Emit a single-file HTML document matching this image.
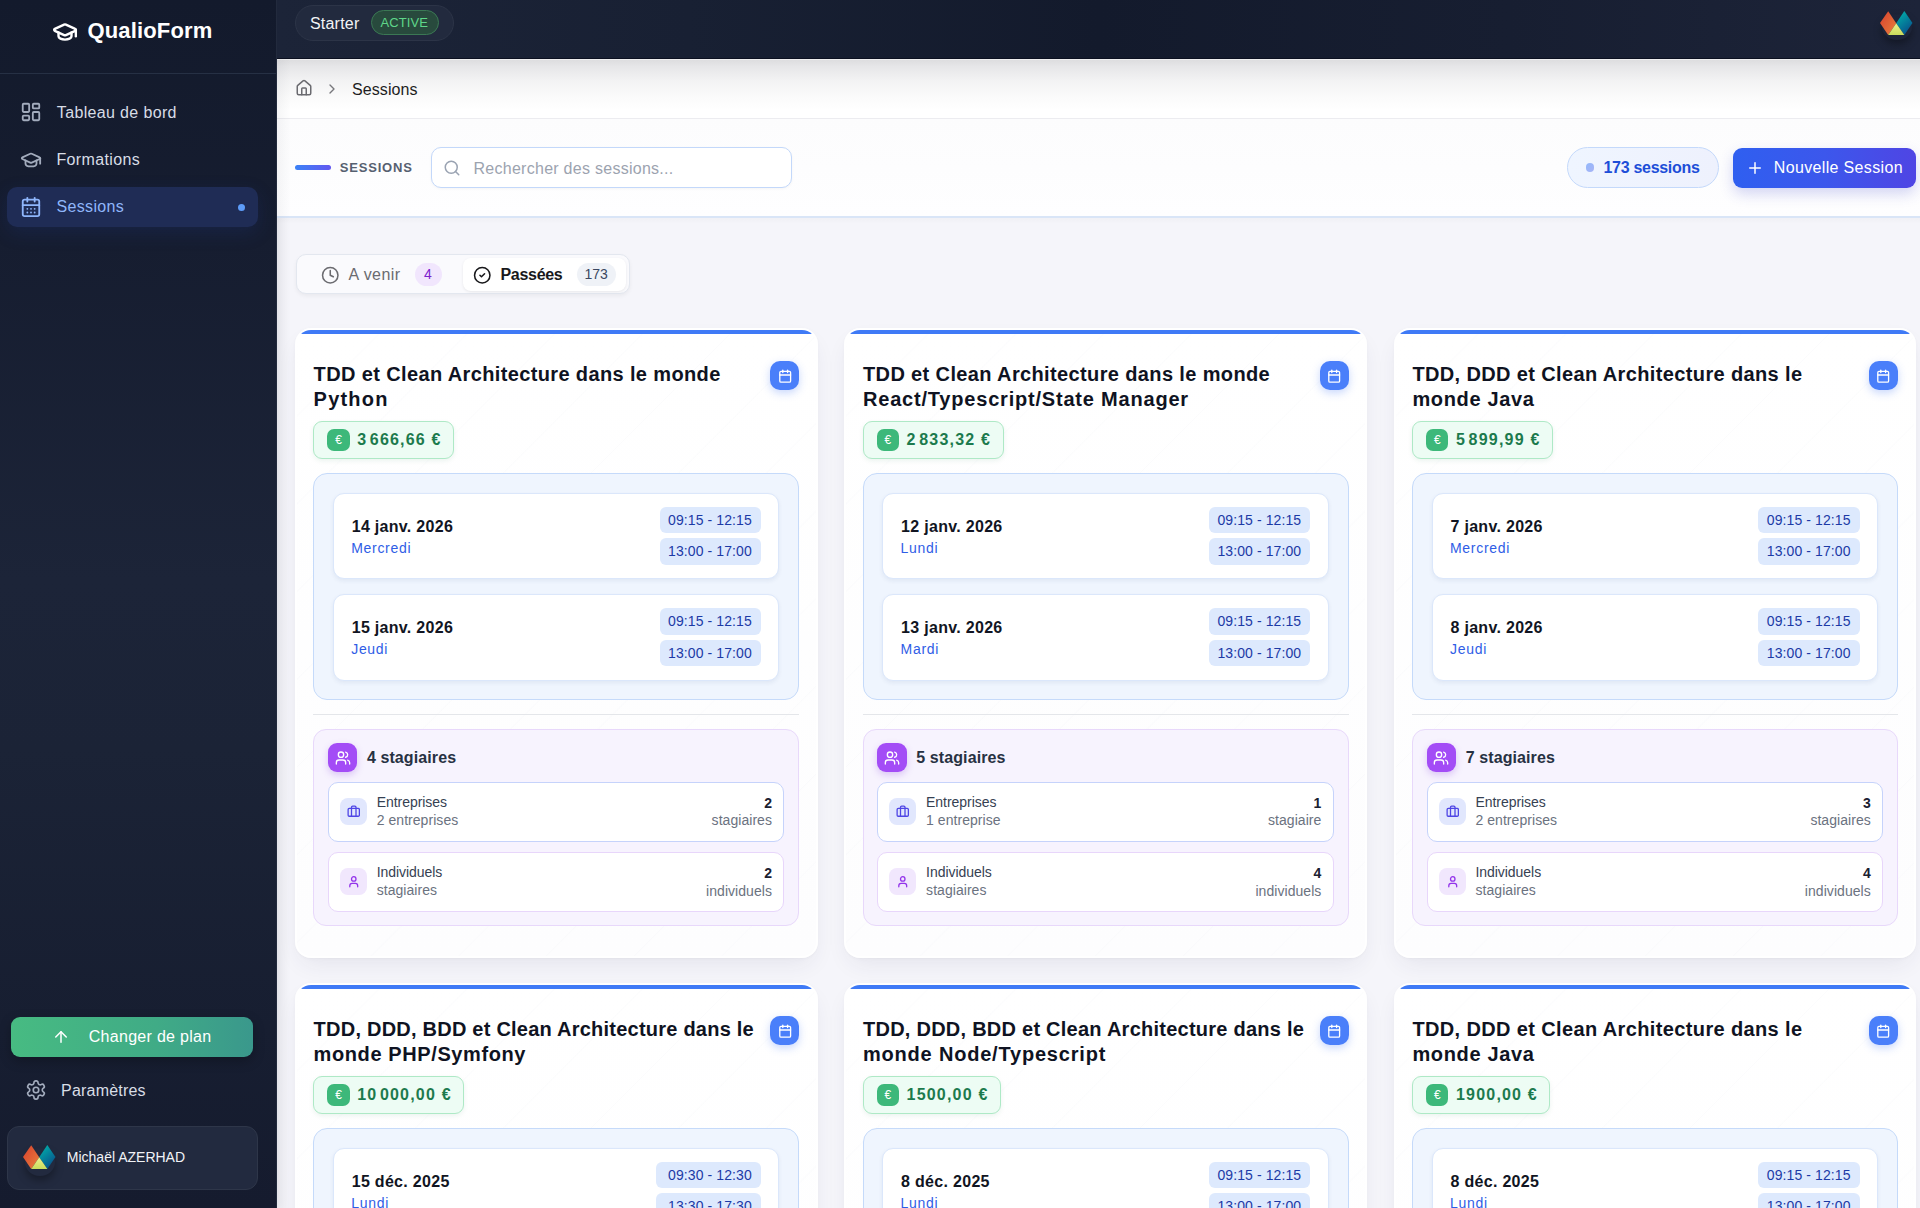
<!DOCTYPE html>
<html><head><meta charset="utf-8"><title>Sessions</title>
<style>
html,body{margin:0;padding:0;width:1920px;height:1208px;overflow:hidden;background:#f5f5fa;font-family:"Liberation Sans", sans-serif;}
*{font-family:"Liberation Sans", sans-serif;}
.card{border-radius:16px;}
.ns{display:inline-block;width:2.5px}
.cardbg{position:absolute;left:0;top:0;right:0;bottom:0;border-radius:16px;background:
 repeating-linear-gradient(135deg, rgba(120,130,170,0.0) 0px, rgba(120,130,170,0.0) 60px, rgba(120,130,170,0.018) 61px, rgba(120,130,170,0.0) 62px),
 linear-gradient(180deg,#ffffff 0%,#fdfdfe 100%);
 border:2px solid rgba(255,255,255,.95);box-sizing:border-box;
 box-shadow:0 10px 24px -6px rgba(40,40,90,.09),0 1px 3px rgba(0,0,0,.03);}
</style></head><body>
<div style="position:absolute;left:0;top:0;width:277px;height:1208px;background:linear-gradient(180deg,#131a2c 0%,#161d30 20%,#1c2438 48%,#1b2336 62%,#171e31 85%,#151b2e 100%);box-shadow:2px 0 10px rgba(0,0,0,.06);"></div><div style="position:absolute;left:0;top:72.5px;width:276px;height:1px;background:#263044"></div><div style="position:absolute;left:276px;top:0;width:1px;height:1208px;background:#222a3d"></div><svg style="position:absolute;left:51.50px;top:18.50px;" width="26" height="26" viewBox="0 0 24 24" fill="none" stroke="#ffffff" stroke-width="2.2" stroke-linecap="round" stroke-linejoin="round"><path d="M21.42 10.922a1 1 0 0 0-.019-1.838L12.83 5.18a2 2 0 0 0-1.66 0L2.6 9.08a1 1 0 0 0 0 1.832l8.57 3.908a2 2 0 0 0 1.66 0z"/><path d="M22 10v6"/><path d="M6 12.5V16a6 3 0 0 0 12 0v-3.5"/></svg><div style="position:absolute;left:87.50px;top:16.58px;font-size:22px;line-height:28px;font-weight:700;color:#ffffff;white-space:nowrap;letter-spacing:0.15px;">QualioForm</div><div style="position:absolute;left:7px;top:187px;width:251px;height:40px;border-radius:10px;background:#1f2c55;box-shadow:0 6px 18px rgba(30,60,140,.22)"></div><svg style="position:absolute;left:20.20px;top:101.40px;" width="22" height="22" viewBox="0 0 24 24" fill="none" stroke="#a3acbd" stroke-width="2" stroke-linecap="round" stroke-linejoin="round"><rect width="7" height="9" x="3" y="3" rx="1"/><rect width="7" height="5" x="14" y="3" rx="1"/><rect width="7" height="9" x="14" y="12" rx="1"/><rect width="7" height="5" x="3" y="16" rx="1"/></svg><div style="position:absolute;left:56.80px;top:102.56px;font-size:16px;line-height:20px;font-weight:400;color:#d8dde6;white-space:nowrap;letter-spacing:0.35px;">Tableau de bord</div><svg style="position:absolute;left:20.00px;top:148.50px;" width="22" height="22" viewBox="0 0 24 24" fill="none" stroke="#a3acbd" stroke-width="2" stroke-linecap="round" stroke-linejoin="round"><path d="M21.42 10.922a1 1 0 0 0-.019-1.838L12.83 5.18a2 2 0 0 0-1.66 0L2.6 9.08a1 1 0 0 0 0 1.832l8.57 3.908a2 2 0 0 0 1.66 0z"/><path d="M22 10v6"/><path d="M6 12.5V16a6 3 0 0 0 12 0v-3.5"/></svg><div style="position:absolute;left:56.50px;top:150.26px;font-size:16px;line-height:20px;font-weight:400;color:#d8dde6;white-space:nowrap;letter-spacing:0.35px;">Formations</div><svg style="position:absolute;left:20.20px;top:195.90px;" width="22" height="22" viewBox="0 0 24 24" fill="none" stroke="#8fb6fb" stroke-width="2" stroke-linecap="round" stroke-linejoin="round"><path d="M8 2v4"/><path d="M16 2v4"/><rect width="18" height="18" x="3" y="4" rx="2"/><path d="M3 10h18"/><path d="M8 14h.01"/><path d="M12 14h.01"/><path d="M16 14h.01"/><path d="M8 18h.01"/><path d="M12 18h.01"/><path d="M16 18h.01"/></svg><div style="position:absolute;left:56.50px;top:197.26px;font-size:16px;line-height:20px;font-weight:400;color:#8fb6fb;white-space:nowrap;letter-spacing:0.35px;">Sessions</div><div style="position:absolute;left:237.5px;top:203.7px;width:7px;height:7px;border-radius:50%;background:#5d9cf8"></div><div style="position:absolute;left:11px;top:1017px;width:242px;height:40px;border-radius:9px;background:linear-gradient(90deg,#47bb82 0%,#40ab86 60%,#3a988c 100%);box-shadow:0 4px 12px rgba(0,0,0,.25)"></div><svg style="position:absolute;left:52.20px;top:1027.80px;" width="18" height="18" viewBox="0 0 24 24" fill="none" stroke="#ffffff" stroke-width="2" stroke-linecap="round" stroke-linejoin="round"><path d="m5 12 7-7 7 7"/><path d="M12 19V5"/></svg><div style="position:absolute;left:88.70px;top:1027.16px;font-size:16px;line-height:20px;font-weight:400;color:#ffffff;white-space:nowrap;letter-spacing:0.3px;">Changer de plan</div><svg style="position:absolute;left:24.60px;top:1079.40px;" width="22" height="22" viewBox="0 0 24 24" fill="none" stroke="#a3acbd" stroke-width="1.8" stroke-linecap="round" stroke-linejoin="round"><path d="M12.22 2h-.44a2 2 0 0 0-2 2v.18a2 2 0 0 1-1 1.73l-.43.25a2 2 0 0 1-2 0l-.15-.08a2 2 0 0 0-2.73.73l-.22.38a2 2 0 0 0 .73 2.73l.15.1a2 2 0 0 1 1 1.72v.51a2 2 0 0 1-1 1.74l-.15.09a2 2 0 0 0-.73 2.73l.22.38a2 2 0 0 0 2.73.73l.15-.08a2 2 0 0 1 2 0l.43.25a2 2 0 0 1 1 1.73V20a2 2 0 0 0 2 2h.44a2 2 0 0 0 2-2v-.18a2 2 0 0 1 1-1.73l.43-.25a2 2 0 0 1 2 0l.15.08a2 2 0 0 0 2.73-.73l.22-.39a2 2 0 0 0-.73-2.73l-.15-.08a2 2 0 0 1-1-1.74v-.5a2 2 0 0 1 1-1.74l.15-.09a2 2 0 0 0 .73-2.73l-.22-.38a2 2 0 0 0-2.73-.73l-.15.08a2 2 0 0 1-2 0l-.43-.25a2 2 0 0 1-1-1.73V4a2 2 0 0 0-2-2z"/><circle cx="12" cy="12" r="3"/></svg><div style="position:absolute;left:61.10px;top:1081.26px;font-size:16px;line-height:20px;font-weight:400;color:#d8dde6;white-space:nowrap;letter-spacing:0.2px;">Paramètres</div><div style="position:absolute;left:7px;top:1125.5px;width:251px;height:64.5px;border-radius:12px;background:#222a3f;border:1px solid #2e3649;box-sizing:border-box"></div><div style="position:absolute;left:25px;top:1148px;width:30px;height:28px;border-radius:50%;box-shadow:0 4px 8px rgba(0,0,0,.35)"></div><svg style="position:absolute;left:23.4px;top:1145px" width="32.5" height="24" viewBox="0 0 32.5 24"><defs><linearGradient id="lr" x1="0" y1="0" x2="1" y2="1"><stop offset="0" stop-color="#d8402e"/><stop offset="1" stop-color="#e8803c"/></linearGradient><linearGradient id="lt" x1="0" y1="0" x2="0.6" y2="1"><stop offset="0" stop-color="#00b9ad"/><stop offset="1" stop-color="#08528c"/></linearGradient><linearGradient id="ly" x1="0" y1="0" x2="0" y2="1"><stop offset="0" stop-color="#eef08e"/><stop offset="1" stop-color="#c9dc5c"/></linearGradient></defs><path d="M8.2 0.3 L0 12 L8.2 23.9 L16.2 12.2 Z" fill="url(#lr)"/><path d="M24.3 0.1 L32.5 12 L24.3 23.9 L16.2 12.2 Z" fill="url(#lt)"/><path d="M16.2 12.2 L8.2 23.9 L24.3 23.9 Z" fill="url(#ly)"/></svg><div style="position:absolute;left:66.80px;top:1148.05px;font-size:14px;line-height:18px;font-weight:400;color:#f1f3f7;white-space:nowrap;letter-spacing:0px;">Michaël AZERHAD</div><div style="position:absolute;left:277px;top:0;width:1643px;height:58.5px;background:linear-gradient(90deg,#1c2438 0%,#182033 25%,#131a2c 50%,#171e31 75%,#1d2439 100%);border-bottom:1px solid #0b1020;box-sizing:border-box"></div><div style="position:absolute;left:295px;top:5px;width:158.5px;height:36px;border-radius:18px;background:#222a3e;border:1px solid #2c3447;box-sizing:border-box"></div><div style="position:absolute;left:310.00px;top:13.76px;font-size:16px;line-height:20px;font-weight:400;color:#f3f4f6;white-space:nowrap;letter-spacing:0.2px;">Starter</div><div style="position:absolute;left:370.6px;top:10.4px;width:68.3px;height:25px;border-radius:13px;background:#284a3d;border:1px solid #3b7854;box-sizing:border-box"></div><div style="position:absolute;left:380.50px;top:15.10px;font-size:13px;line-height:16px;font-weight:400;color:#5fd68a;white-space:nowrap;letter-spacing:0.1px;">ACTIVE</div><div style="position:absolute;left:1882px;top:14px;width:30px;height:26px;border-radius:50%;box-shadow:0 4px 8px rgba(0,0,0,.35)"></div><svg style="position:absolute;left:1880.3px;top:10.6px" width="32.5" height="24" viewBox="0 0 32.5 24"><defs><linearGradient id="lr" x1="0" y1="0" x2="1" y2="1"><stop offset="0" stop-color="#d8402e"/><stop offset="1" stop-color="#e8803c"/></linearGradient><linearGradient id="lt" x1="0" y1="0" x2="0.6" y2="1"><stop offset="0" stop-color="#00b9ad"/><stop offset="1" stop-color="#08528c"/></linearGradient><linearGradient id="ly" x1="0" y1="0" x2="0" y2="1"><stop offset="0" stop-color="#eef08e"/><stop offset="1" stop-color="#c9dc5c"/></linearGradient></defs><path d="M8.2 0.3 L0 12 L8.2 23.9 L16.2 12.2 Z" fill="url(#lr)"/><path d="M24.3 0.1 L32.5 12 L24.3 23.9 L16.2 12.2 Z" fill="url(#lt)"/><path d="M16.2 12.2 L8.2 23.9 L24.3 23.9 Z" fill="url(#ly)"/></svg><div style="position:absolute;left:277px;top:58.5px;width:1643px;height:60px;background:linear-gradient(180deg,#dcdcde 0%,#e6e6e8 12%,#f2f2f3 35%,#fafafa 60%,#ffffff 85%)"></div><div style="position:absolute;left:277px;top:59px;width:1643px;height:1.2px;background:#eeeeef"></div><div style="position:absolute;left:277px;top:118px;width:1643px;height:1px;background:#ececf0"></div><svg style="position:absolute;left:295.20px;top:79.30px;" width="18" height="18" viewBox="0 0 24 24" fill="none" stroke="#6b6b70" stroke-width="2" stroke-linecap="round" stroke-linejoin="round"><path d="M15 21v-8a1 1 0 0 0-1-1h-4a1 1 0 0 0-1 1v8"/><path d="M3 10a2 2 0 0 1 .709-1.528l7-5.999a2 2 0 0 1 2.582 0l7 5.999A2 2 0 0 1 21 10v9a2 2 0 0 1-2 2H5a2 2 0 0 1-2-2z"/></svg><svg style="position:absolute;left:324.30px;top:80.70px;" width="16" height="16" viewBox="0 0 24 24" fill="none" stroke="#77777c" stroke-width="2" stroke-linecap="round" stroke-linejoin="round"><path d="m9 18 6-6-6-6"/></svg><div style="position:absolute;left:352.00px;top:79.66px;font-size:16px;line-height:20px;font-weight:400;color:#1d1d22;white-space:nowrap;letter-spacing:0.1px;">Sessions</div><div style="position:absolute;left:277px;top:119px;width:1643px;height:97px;background:linear-gradient(180deg,#fcfcfd,#fefeff)"></div><div style="position:absolute;left:277px;top:216px;width:1643px;height:1.5px;background:#d9e5f7"></div><div style="position:absolute;left:277px;top:217.5px;width:1643px;height:6px;background:linear-gradient(180deg,rgba(0,0,0,.02),rgba(0,0,0,0))"></div><div style="position:absolute;left:295px;top:165.4px;width:36px;height:4.6px;border-radius:3px;background:linear-gradient(90deg,#3b82f6,#6358f0)"></div><div style="position:absolute;left:339.80px;top:159.70px;font-size:13px;line-height:16px;font-weight:700;color:#566070;white-space:nowrap;letter-spacing:0.8px;">SESSIONS</div><div style="position:absolute;left:431px;top:147px;width:361px;height:41px;border-radius:10px;background:#ffffff;border:1.5px solid #c3d8fa;box-sizing:border-box;box-shadow:0 1px 3px rgba(0,0,0,.04)"></div><svg style="position:absolute;left:442.50px;top:158.50px;" width="18" height="18" viewBox="0 0 24 24" fill="none" stroke="#9aa3b2" stroke-width="2" stroke-linecap="round" stroke-linejoin="round"><circle cx="11" cy="11" r="8"/><path d="m21 21-4.3-4.3"/></svg><div style="position:absolute;left:473.50px;top:158.56px;font-size:16px;line-height:20px;font-weight:400;color:#9ca3af;white-space:nowrap;letter-spacing:0.27px;">Rechercher des sessions...</div><div style="position:absolute;left:1566.6px;top:146.8px;width:152.8px;height:41.6px;border-radius:21px;background:linear-gradient(90deg,#eff5ff,#eef1fd);border:1.5px solid #c4d9fb;box-sizing:border-box"></div><div style="position:absolute;left:1585.6px;top:163.2px;width:8.6px;height:8.6px;border-radius:50%;background:linear-gradient(135deg,#93b8fb,#a8b4f6)"></div><div style="position:absolute;left:1603.50px;top:157.86px;font-size:16px;line-height:20px;font-weight:700;color:#1d4ed8;white-space:nowrap;letter-spacing:-0.3px;">173 sessions</div><div style="position:absolute;left:1733px;top:147.5px;width:183.3px;height:40.5px;border-radius:9px;background:linear-gradient(90deg,#2f5ff0 0%,#3c57ec 50%,#4f45e4 100%);box-shadow:0 6px 14px rgba(60,70,200,.22)"></div><svg style="position:absolute;left:1746.40px;top:158.50px;" width="18" height="18" viewBox="0 0 24 24" fill="none" stroke="#ffffff" stroke-width="2" stroke-linecap="round" stroke-linejoin="round"><path d="M5 12h14"/><path d="M12 5v14"/></svg><div style="position:absolute;left:1773.75px;top:157.86px;font-size:16px;line-height:20px;font-weight:400;color:#ffffff;white-space:nowrap;letter-spacing:0.35px;">Nouvelle Session</div><div style="position:absolute;left:277px;top:217.5px;width:1643px;height:990.5px;background:#f5f5fa;z-index:-1"></div><div style="position:absolute;left:277px;top:58.5px;width:14px;height:1150px;background:linear-gradient(90deg,rgba(20,25,50,.045),rgba(20,25,50,0))"></div><div style="position:absolute;left:296px;top:254px;width:333.5px;height:39.5px;border-radius:10px;background:#fafafd;border:1px solid #e3e7ef;box-sizing:border-box;box-shadow:0 2px 4px rgba(0,0,0,.05)"></div><div style="position:absolute;left:462.8px;top:258px;width:163.5px;height:32.6px;border-radius:8px;background:#ffffff;box-shadow:0 1px 3px rgba(0,0,0,.08)"></div><svg style="position:absolute;left:320.60px;top:265.80px;" width="18.5" height="18.5" viewBox="0 0 24 24" fill="none" stroke="#6b6b70" stroke-width="2" stroke-linecap="round" stroke-linejoin="round"><circle cx="12" cy="12" r="10"/><polyline points="12 6 12 12 16 14"/></svg><div style="position:absolute;left:348.50px;top:265.46px;font-size:16px;line-height:20px;font-weight:400;color:#6b6b70;white-space:nowrap;letter-spacing:0.45px;">A venir</div><div style="position:absolute;left:414.5px;top:263.2px;width:27px;height:23px;border-radius:12px;background:#f1e6fd;text-align:center;font-size:14px;line-height:23px;color:#7e22ce">4</div><svg style="position:absolute;left:473.00px;top:265.80px;" width="18.5" height="18.5" viewBox="0 0 24 24" fill="none" stroke="#18181b" stroke-width="2" stroke-linecap="round" stroke-linejoin="round"><circle cx="12" cy="12" r="10"/><path d="m9 12 2 2 4-4"/></svg><div style="position:absolute;left:500.50px;top:265.46px;font-size:16px;line-height:20px;font-weight:700;color:#18181b;white-space:nowrap;letter-spacing:-0.3px;">Passées</div><div style="position:absolute;left:576.7px;top:263.2px;width:39px;height:23px;border-radius:12px;background:#eff2f7;text-align:center;font-size:14px;line-height:23px;color:#3b4861">173</div><div class="card" style="position:absolute;left:295px;top:328px;width:522.5px;height:630px;"><div class="cardbg"></div><div style="position:absolute;left:2px;top:2px;right:2px;height:40px;border-radius:14px 14px 0 0;overflow:hidden"><div style="height:4px;background:#3f7af6"></div></div><div style="position:absolute;left:18.60px;top:33.67px;font-size:20px;line-height:25px;font-weight:700;color:#0f1322;white-space:nowrap;letter-spacing:0.37px;">TDD et Clean Architecture dans le monde</div><div style="position:absolute;left:18.60px;top:58.77px;font-size:20px;line-height:25px;font-weight:700;color:#0f1322;white-space:nowrap;letter-spacing:1.2px;">Python</div><div style="position:absolute;left:475.3px;top:33.4px;width:29px;height:29px;border-radius:10px;background:#4a7ffa;box-shadow:0 3px 8px rgba(59,110,246,.28)"></div><svg style="position:absolute;left:482.60px;top:40.70px;" width="14.4" height="14.4" viewBox="0 0 24 24" fill="none" stroke="#ffffff" stroke-width="2.2" stroke-linecap="round" stroke-linejoin="round"><path d="M8 2v4"/><path d="M16 2v4"/><rect width="18" height="18" x="3" y="4" rx="2"/><path d="M3 10h18"/></svg><div style="position:absolute;left:18.3px;top:93px;height:37.7px;border-radius:9px;background:#edfcf4;border:1.5px solid #aee9c6;box-sizing:border-box;box-shadow:0 2px 5px rgba(16,120,70,.08);padding:0 11.5px 0 13px;display:flex;align-items:center;white-space:nowrap"><span style="display:inline-block;width:22.4px;height:22px;border-radius:7px;background:#3db87a;color:#fff;font-size:12px;line-height:22px;text-align:center;margin-right:7.5px">€</span><span style="font-size:16px;font-weight:700;color:#1c7a4d;letter-spacing:1.2px;line-height:22px">3<i class="ns"></i>666,66&nbsp;€</span></div><div style="position:absolute;left:18.3px;top:145.2px;width:486px;height:227px;border-radius:14px;background:#eff5fe;border:1.5px solid #c5dafa;box-sizing:border-box"></div><div style="position:absolute;left:38px;top:164.8px;width:446.3px;height:86.6px;border-radius:11px;background:#ffffff;border:1px solid #dbe7fb;box-sizing:border-box;box-shadow:0 2px 4px rgba(30,60,120,.07)"></div><div style="position:absolute;left:56.70px;top:188.66px;font-size:16px;line-height:20px;font-weight:700;color:#111522;white-space:nowrap;letter-spacing:0.3px;">14 janv. 2026</div><div style="position:absolute;left:56.20px;top:211.15px;font-size:14px;line-height:18px;font-weight:400;color:#2f5de6;white-space:nowrap;letter-spacing:0.7px;">Mercredi</div><div style="position:absolute;right:56.499999999999986px;top:178.8px;display:flex;flex-direction:column"><div style="height:26.5px;border-radius:6px;background:#dde9fd;color:#1c3aa6;font-size:14px;line-height:26.5px;text-align:right;padding:0 9.2px 0 8.5px;white-space:nowrap;letter-spacing:0.1px;margin-bottom:5px">09:15 - 12:15</div><div style="height:26.5px;border-radius:6px;background:#dde9fd;color:#1c3aa6;font-size:14px;line-height:26.5px;text-align:right;padding:0 9.2px 0 8.5px;white-space:nowrap;letter-spacing:0.1px;margin-bottom:5px">13:00 - 17:00</div></div><div style="position:absolute;left:38px;top:266.0px;width:446.3px;height:86.6px;border-radius:11px;background:#ffffff;border:1px solid #dbe7fb;box-sizing:border-box;box-shadow:0 2px 4px rgba(30,60,120,.07)"></div><div style="position:absolute;left:56.70px;top:289.86px;font-size:16px;line-height:20px;font-weight:700;color:#111522;white-space:nowrap;letter-spacing:0.3px;">15 janv. 2026</div><div style="position:absolute;left:56.20px;top:312.35px;font-size:14px;line-height:18px;font-weight:400;color:#2f5de6;white-space:nowrap;letter-spacing:0.7px;">Jeudi</div><div style="position:absolute;right:56.499999999999986px;top:280.0px;display:flex;flex-direction:column"><div style="height:26.5px;border-radius:6px;background:#dde9fd;color:#1c3aa6;font-size:14px;line-height:26.5px;text-align:right;padding:0 9.2px 0 8.5px;white-space:nowrap;letter-spacing:0.1px;margin-bottom:5px">09:15 - 12:15</div><div style="height:26.5px;border-radius:6px;background:#dde9fd;color:#1c3aa6;font-size:14px;line-height:26.5px;text-align:right;padding:0 9.2px 0 8.5px;white-space:nowrap;letter-spacing:0.1px;margin-bottom:5px">13:00 - 17:00</div></div><div style="position:absolute;left:18.3px;top:385.8px;width:486px;height:1px;background:#e4e6ea"></div><div style="position:absolute;left:18.3px;top:400.8px;width:486px;height:197.2px;border-radius:13px;background:#f7f3fe;border:1.5px solid #e8d8fb;box-sizing:border-box"></div><div style="position:absolute;left:33px;top:415px;width:29.2px;height:29.2px;border-radius:9px;background:#a34cf6;box-shadow:0 3px 7px rgba(130,60,220,.25)"></div><svg style="position:absolute;left:39.60px;top:421.60px;" width="16" height="16" viewBox="0 0 24 24" fill="none" stroke="#ffffff" stroke-width="2" stroke-linecap="round" stroke-linejoin="round"><path d="M16 21v-2a4 4 0 0 0-4-4H6a4 4 0 0 0-4 4v2"/><circle cx="9" cy="7" r="4"/><path d="M22 21v-2a4 4 0 0 0-3-3.87"/><path d="M16 3.13a4 4 0 0 1 0 7.75"/></svg><div style="position:absolute;left:71.90px;top:419.96px;font-size:16px;line-height:20px;font-weight:700;color:#273142;white-space:nowrap;letter-spacing:0.1px;">4 stagiaires</div><div style="position:absolute;left:33px;top:453.5px;width:456.3px;height:60px;border-radius:10px;background:#ffffff;border:1.2px solid #c6d3fb;box-sizing:border-box"></div><div style="position:absolute;left:45.1px;top:470.2px;width:26.9px;height:26.9px;border-radius:8px;background:#e1e7fd"></div><svg style="position:absolute;left:51.80px;top:476.90px;" width="13.5" height="13.5" viewBox="0 0 24 24" fill="none" stroke="#4f46e5" stroke-width="2.3" stroke-linecap="round" stroke-linejoin="round"><path d="M16 20V4a2 2 0 0 0-2-2h-4a2 2 0 0 0-2 2v16"/><rect width="20" height="14" x="2" y="6" rx="2"/></svg><div style="position:absolute;left:81.70px;top:464.95px;font-size:14px;line-height:18px;font-weight:400;color:#364152;white-space:nowrap;letter-spacing:-0.05px;">Entreprises</div><div style="position:absolute;left:81.70px;top:483.15px;font-size:14px;line-height:18px;font-weight:400;color:#6b7280;white-space:nowrap;letter-spacing:0.05px;">2 entreprises</div><div style="position:absolute;left:33.00px;top:465.75px;font-size:14px;line-height:18px;font-weight:700;color:#1a2030;white-space:nowrap;letter-spacing:0px;width:444.0px;text-align:right;">2</div><div style="position:absolute;left:33.00px;top:483.45px;font-size:14px;line-height:18px;font-weight:400;color:#6b7280;white-space:nowrap;letter-spacing:0.05px;width:444.0px;text-align:right;">stagiaires</div><div style="position:absolute;left:33px;top:523.6px;width:456.3px;height:60px;border-radius:10px;background:#ffffff;border:1.2px solid #e8d6fb;box-sizing:border-box"></div><div style="position:absolute;left:45.1px;top:540.3000000000001px;width:26.9px;height:26.9px;border-radius:8px;background:#f1e7fd"></div><svg style="position:absolute;left:51.80px;top:547.00px;" width="13.5" height="13.5" viewBox="0 0 24 24" fill="none" stroke="#9333ea" stroke-width="2.3" stroke-linecap="round" stroke-linejoin="round"><path d="M19 21v-2a4 4 0 0 0-4-4H9a4 4 0 0 0-4 4v2"/><circle cx="12" cy="7" r="4"/></svg><div style="position:absolute;left:81.70px;top:535.05px;font-size:14px;line-height:18px;font-weight:400;color:#364152;white-space:nowrap;letter-spacing:-0.05px;">Individuels</div><div style="position:absolute;left:81.70px;top:553.25px;font-size:14px;line-height:18px;font-weight:400;color:#6b7280;white-space:nowrap;letter-spacing:0.05px;">stagiaires</div><div style="position:absolute;left:33.00px;top:535.85px;font-size:14px;line-height:18px;font-weight:700;color:#1a2030;white-space:nowrap;letter-spacing:0px;width:444.0px;text-align:right;">2</div><div style="position:absolute;left:33.00px;top:553.55px;font-size:14px;line-height:18px;font-weight:400;color:#6b7280;white-space:nowrap;letter-spacing:0.05px;width:444.0px;text-align:right;">individuels</div></div><div class="card" style="position:absolute;left:844.4px;top:328px;width:522.5px;height:630px;"><div class="cardbg"></div><div style="position:absolute;left:2px;top:2px;right:2px;height:40px;border-radius:14px 14px 0 0;overflow:hidden"><div style="height:4px;background:#3f7af6"></div></div><div style="position:absolute;left:18.60px;top:33.67px;font-size:20px;line-height:25px;font-weight:700;color:#0f1322;white-space:nowrap;letter-spacing:0.37px;">TDD et Clean Architecture dans le monde</div><div style="position:absolute;left:18.60px;top:58.77px;font-size:20px;line-height:25px;font-weight:700;color:#0f1322;white-space:nowrap;letter-spacing:0.8px;">React/Typescript/State Manager</div><div style="position:absolute;left:475.3px;top:33.4px;width:29px;height:29px;border-radius:10px;background:#4a7ffa;box-shadow:0 3px 8px rgba(59,110,246,.28)"></div><svg style="position:absolute;left:482.60px;top:40.70px;" width="14.4" height="14.4" viewBox="0 0 24 24" fill="none" stroke="#ffffff" stroke-width="2.2" stroke-linecap="round" stroke-linejoin="round"><path d="M8 2v4"/><path d="M16 2v4"/><rect width="18" height="18" x="3" y="4" rx="2"/><path d="M3 10h18"/></svg><div style="position:absolute;left:18.3px;top:93px;height:37.7px;border-radius:9px;background:#edfcf4;border:1.5px solid #aee9c6;box-sizing:border-box;box-shadow:0 2px 5px rgba(16,120,70,.08);padding:0 11.5px 0 13px;display:flex;align-items:center;white-space:nowrap"><span style="display:inline-block;width:22.4px;height:22px;border-radius:7px;background:#3db87a;color:#fff;font-size:12px;line-height:22px;text-align:center;margin-right:7.5px">€</span><span style="font-size:16px;font-weight:700;color:#1c7a4d;letter-spacing:1.2px;line-height:22px">2<i class="ns"></i>833,32&nbsp;€</span></div><div style="position:absolute;left:18.3px;top:145.2px;width:486px;height:227px;border-radius:14px;background:#eff5fe;border:1.5px solid #c5dafa;box-sizing:border-box"></div><div style="position:absolute;left:38px;top:164.8px;width:446.3px;height:86.6px;border-radius:11px;background:#ffffff;border:1px solid #dbe7fb;box-sizing:border-box;box-shadow:0 2px 4px rgba(30,60,120,.07)"></div><div style="position:absolute;left:56.70px;top:188.66px;font-size:16px;line-height:20px;font-weight:700;color:#111522;white-space:nowrap;letter-spacing:0.3px;">12 janv. 2026</div><div style="position:absolute;left:56.20px;top:211.15px;font-size:14px;line-height:18px;font-weight:400;color:#2f5de6;white-space:nowrap;letter-spacing:0.7px;">Lundi</div><div style="position:absolute;right:56.499999999999986px;top:178.8px;display:flex;flex-direction:column"><div style="height:26.5px;border-radius:6px;background:#dde9fd;color:#1c3aa6;font-size:14px;line-height:26.5px;text-align:right;padding:0 9.2px 0 8.5px;white-space:nowrap;letter-spacing:0.1px;margin-bottom:5px">09:15 - 12:15</div><div style="height:26.5px;border-radius:6px;background:#dde9fd;color:#1c3aa6;font-size:14px;line-height:26.5px;text-align:right;padding:0 9.2px 0 8.5px;white-space:nowrap;letter-spacing:0.1px;margin-bottom:5px">13:00 - 17:00</div></div><div style="position:absolute;left:38px;top:266.0px;width:446.3px;height:86.6px;border-radius:11px;background:#ffffff;border:1px solid #dbe7fb;box-sizing:border-box;box-shadow:0 2px 4px rgba(30,60,120,.07)"></div><div style="position:absolute;left:56.70px;top:289.86px;font-size:16px;line-height:20px;font-weight:700;color:#111522;white-space:nowrap;letter-spacing:0.3px;">13 janv. 2026</div><div style="position:absolute;left:56.20px;top:312.35px;font-size:14px;line-height:18px;font-weight:400;color:#2f5de6;white-space:nowrap;letter-spacing:0.7px;">Mardi</div><div style="position:absolute;right:56.499999999999986px;top:280.0px;display:flex;flex-direction:column"><div style="height:26.5px;border-radius:6px;background:#dde9fd;color:#1c3aa6;font-size:14px;line-height:26.5px;text-align:right;padding:0 9.2px 0 8.5px;white-space:nowrap;letter-spacing:0.1px;margin-bottom:5px">09:15 - 12:15</div><div style="height:26.5px;border-radius:6px;background:#dde9fd;color:#1c3aa6;font-size:14px;line-height:26.5px;text-align:right;padding:0 9.2px 0 8.5px;white-space:nowrap;letter-spacing:0.1px;margin-bottom:5px">13:00 - 17:00</div></div><div style="position:absolute;left:18.3px;top:385.8px;width:486px;height:1px;background:#e4e6ea"></div><div style="position:absolute;left:18.3px;top:400.8px;width:486px;height:197.2px;border-radius:13px;background:#f7f3fe;border:1.5px solid #e8d8fb;box-sizing:border-box"></div><div style="position:absolute;left:33px;top:415px;width:29.2px;height:29.2px;border-radius:9px;background:#a34cf6;box-shadow:0 3px 7px rgba(130,60,220,.25)"></div><svg style="position:absolute;left:39.60px;top:421.60px;" width="16" height="16" viewBox="0 0 24 24" fill="none" stroke="#ffffff" stroke-width="2" stroke-linecap="round" stroke-linejoin="round"><path d="M16 21v-2a4 4 0 0 0-4-4H6a4 4 0 0 0-4 4v2"/><circle cx="9" cy="7" r="4"/><path d="M22 21v-2a4 4 0 0 0-3-3.87"/><path d="M16 3.13a4 4 0 0 1 0 7.75"/></svg><div style="position:absolute;left:71.90px;top:419.96px;font-size:16px;line-height:20px;font-weight:700;color:#273142;white-space:nowrap;letter-spacing:0.1px;">5 stagiaires</div><div style="position:absolute;left:33px;top:453.5px;width:456.3px;height:60px;border-radius:10px;background:#ffffff;border:1.2px solid #c6d3fb;box-sizing:border-box"></div><div style="position:absolute;left:45.1px;top:470.2px;width:26.9px;height:26.9px;border-radius:8px;background:#e1e7fd"></div><svg style="position:absolute;left:51.80px;top:476.90px;" width="13.5" height="13.5" viewBox="0 0 24 24" fill="none" stroke="#4f46e5" stroke-width="2.3" stroke-linecap="round" stroke-linejoin="round"><path d="M16 20V4a2 2 0 0 0-2-2h-4a2 2 0 0 0-2 2v16"/><rect width="20" height="14" x="2" y="6" rx="2"/></svg><div style="position:absolute;left:81.70px;top:464.95px;font-size:14px;line-height:18px;font-weight:400;color:#364152;white-space:nowrap;letter-spacing:-0.05px;">Entreprises</div><div style="position:absolute;left:81.70px;top:483.15px;font-size:14px;line-height:18px;font-weight:400;color:#6b7280;white-space:nowrap;letter-spacing:0.05px;">1 entreprise</div><div style="position:absolute;left:33.00px;top:465.75px;font-size:14px;line-height:18px;font-weight:700;color:#1a2030;white-space:nowrap;letter-spacing:0px;width:444.0px;text-align:right;">1</div><div style="position:absolute;left:33.00px;top:483.45px;font-size:14px;line-height:18px;font-weight:400;color:#6b7280;white-space:nowrap;letter-spacing:0.05px;width:444.0px;text-align:right;">stagiaire</div><div style="position:absolute;left:33px;top:523.6px;width:456.3px;height:60px;border-radius:10px;background:#ffffff;border:1.2px solid #e8d6fb;box-sizing:border-box"></div><div style="position:absolute;left:45.1px;top:540.3000000000001px;width:26.9px;height:26.9px;border-radius:8px;background:#f1e7fd"></div><svg style="position:absolute;left:51.80px;top:547.00px;" width="13.5" height="13.5" viewBox="0 0 24 24" fill="none" stroke="#9333ea" stroke-width="2.3" stroke-linecap="round" stroke-linejoin="round"><path d="M19 21v-2a4 4 0 0 0-4-4H9a4 4 0 0 0-4 4v2"/><circle cx="12" cy="7" r="4"/></svg><div style="position:absolute;left:81.70px;top:535.05px;font-size:14px;line-height:18px;font-weight:400;color:#364152;white-space:nowrap;letter-spacing:-0.05px;">Individuels</div><div style="position:absolute;left:81.70px;top:553.25px;font-size:14px;line-height:18px;font-weight:400;color:#6b7280;white-space:nowrap;letter-spacing:0.05px;">stagiaires</div><div style="position:absolute;left:33.00px;top:535.85px;font-size:14px;line-height:18px;font-weight:700;color:#1a2030;white-space:nowrap;letter-spacing:0px;width:444.0px;text-align:right;">4</div><div style="position:absolute;left:33.00px;top:553.55px;font-size:14px;line-height:18px;font-weight:400;color:#6b7280;white-space:nowrap;letter-spacing:0.05px;width:444.0px;text-align:right;">individuels</div></div><div class="card" style="position:absolute;left:1393.8px;top:328px;width:522.5px;height:630px;"><div class="cardbg"></div><div style="position:absolute;left:2px;top:2px;right:2px;height:40px;border-radius:14px 14px 0 0;overflow:hidden"><div style="height:4px;background:#3f7af6"></div></div><div style="position:absolute;left:18.60px;top:33.67px;font-size:20px;line-height:25px;font-weight:700;color:#0f1322;white-space:nowrap;letter-spacing:0.37px;">TDD, DDD et Clean Architecture dans le</div><div style="position:absolute;left:18.60px;top:58.77px;font-size:20px;line-height:25px;font-weight:700;color:#0f1322;white-space:nowrap;letter-spacing:0.66px;">monde Java</div><div style="position:absolute;left:475.3px;top:33.4px;width:29px;height:29px;border-radius:10px;background:#4a7ffa;box-shadow:0 3px 8px rgba(59,110,246,.28)"></div><svg style="position:absolute;left:482.60px;top:40.70px;" width="14.4" height="14.4" viewBox="0 0 24 24" fill="none" stroke="#ffffff" stroke-width="2.2" stroke-linecap="round" stroke-linejoin="round"><path d="M8 2v4"/><path d="M16 2v4"/><rect width="18" height="18" x="3" y="4" rx="2"/><path d="M3 10h18"/></svg><div style="position:absolute;left:18.3px;top:93px;height:37.7px;border-radius:9px;background:#edfcf4;border:1.5px solid #aee9c6;box-sizing:border-box;box-shadow:0 2px 5px rgba(16,120,70,.08);padding:0 11.5px 0 13px;display:flex;align-items:center;white-space:nowrap"><span style="display:inline-block;width:22.4px;height:22px;border-radius:7px;background:#3db87a;color:#fff;font-size:12px;line-height:22px;text-align:center;margin-right:7.5px">€</span><span style="font-size:16px;font-weight:700;color:#1c7a4d;letter-spacing:1.2px;line-height:22px">5<i class="ns"></i>899,99&nbsp;€</span></div><div style="position:absolute;left:18.3px;top:145.2px;width:486px;height:227px;border-radius:14px;background:#eff5fe;border:1.5px solid #c5dafa;box-sizing:border-box"></div><div style="position:absolute;left:38px;top:164.8px;width:446.3px;height:86.6px;border-radius:11px;background:#ffffff;border:1px solid #dbe7fb;box-sizing:border-box;box-shadow:0 2px 4px rgba(30,60,120,.07)"></div><div style="position:absolute;left:56.70px;top:188.66px;font-size:16px;line-height:20px;font-weight:700;color:#111522;white-space:nowrap;letter-spacing:0.3px;">7 janv. 2026</div><div style="position:absolute;left:56.20px;top:211.15px;font-size:14px;line-height:18px;font-weight:400;color:#2f5de6;white-space:nowrap;letter-spacing:0.7px;">Mercredi</div><div style="position:absolute;right:56.499999999999986px;top:178.8px;display:flex;flex-direction:column"><div style="height:26.5px;border-radius:6px;background:#dde9fd;color:#1c3aa6;font-size:14px;line-height:26.5px;text-align:right;padding:0 9.2px 0 8.5px;white-space:nowrap;letter-spacing:0.1px;margin-bottom:5px">09:15 - 12:15</div><div style="height:26.5px;border-radius:6px;background:#dde9fd;color:#1c3aa6;font-size:14px;line-height:26.5px;text-align:right;padding:0 9.2px 0 8.5px;white-space:nowrap;letter-spacing:0.1px;margin-bottom:5px">13:00 - 17:00</div></div><div style="position:absolute;left:38px;top:266.0px;width:446.3px;height:86.6px;border-radius:11px;background:#ffffff;border:1px solid #dbe7fb;box-sizing:border-box;box-shadow:0 2px 4px rgba(30,60,120,.07)"></div><div style="position:absolute;left:56.70px;top:289.86px;font-size:16px;line-height:20px;font-weight:700;color:#111522;white-space:nowrap;letter-spacing:0.3px;">8 janv. 2026</div><div style="position:absolute;left:56.20px;top:312.35px;font-size:14px;line-height:18px;font-weight:400;color:#2f5de6;white-space:nowrap;letter-spacing:0.7px;">Jeudi</div><div style="position:absolute;right:56.499999999999986px;top:280.0px;display:flex;flex-direction:column"><div style="height:26.5px;border-radius:6px;background:#dde9fd;color:#1c3aa6;font-size:14px;line-height:26.5px;text-align:right;padding:0 9.2px 0 8.5px;white-space:nowrap;letter-spacing:0.1px;margin-bottom:5px">09:15 - 12:15</div><div style="height:26.5px;border-radius:6px;background:#dde9fd;color:#1c3aa6;font-size:14px;line-height:26.5px;text-align:right;padding:0 9.2px 0 8.5px;white-space:nowrap;letter-spacing:0.1px;margin-bottom:5px">13:00 - 17:00</div></div><div style="position:absolute;left:18.3px;top:385.8px;width:486px;height:1px;background:#e4e6ea"></div><div style="position:absolute;left:18.3px;top:400.8px;width:486px;height:197.2px;border-radius:13px;background:#f7f3fe;border:1.5px solid #e8d8fb;box-sizing:border-box"></div><div style="position:absolute;left:33px;top:415px;width:29.2px;height:29.2px;border-radius:9px;background:#a34cf6;box-shadow:0 3px 7px rgba(130,60,220,.25)"></div><svg style="position:absolute;left:39.60px;top:421.60px;" width="16" height="16" viewBox="0 0 24 24" fill="none" stroke="#ffffff" stroke-width="2" stroke-linecap="round" stroke-linejoin="round"><path d="M16 21v-2a4 4 0 0 0-4-4H6a4 4 0 0 0-4 4v2"/><circle cx="9" cy="7" r="4"/><path d="M22 21v-2a4 4 0 0 0-3-3.87"/><path d="M16 3.13a4 4 0 0 1 0 7.75"/></svg><div style="position:absolute;left:71.90px;top:419.96px;font-size:16px;line-height:20px;font-weight:700;color:#273142;white-space:nowrap;letter-spacing:0.1px;">7 stagiaires</div><div style="position:absolute;left:33px;top:453.5px;width:456.3px;height:60px;border-radius:10px;background:#ffffff;border:1.2px solid #c6d3fb;box-sizing:border-box"></div><div style="position:absolute;left:45.1px;top:470.2px;width:26.9px;height:26.9px;border-radius:8px;background:#e1e7fd"></div><svg style="position:absolute;left:51.80px;top:476.90px;" width="13.5" height="13.5" viewBox="0 0 24 24" fill="none" stroke="#4f46e5" stroke-width="2.3" stroke-linecap="round" stroke-linejoin="round"><path d="M16 20V4a2 2 0 0 0-2-2h-4a2 2 0 0 0-2 2v16"/><rect width="20" height="14" x="2" y="6" rx="2"/></svg><div style="position:absolute;left:81.70px;top:464.95px;font-size:14px;line-height:18px;font-weight:400;color:#364152;white-space:nowrap;letter-spacing:-0.05px;">Entreprises</div><div style="position:absolute;left:81.70px;top:483.15px;font-size:14px;line-height:18px;font-weight:400;color:#6b7280;white-space:nowrap;letter-spacing:0.05px;">2 entreprises</div><div style="position:absolute;left:33.00px;top:465.75px;font-size:14px;line-height:18px;font-weight:700;color:#1a2030;white-space:nowrap;letter-spacing:0px;width:444.0px;text-align:right;">3</div><div style="position:absolute;left:33.00px;top:483.45px;font-size:14px;line-height:18px;font-weight:400;color:#6b7280;white-space:nowrap;letter-spacing:0.05px;width:444.0px;text-align:right;">stagiaires</div><div style="position:absolute;left:33px;top:523.6px;width:456.3px;height:60px;border-radius:10px;background:#ffffff;border:1.2px solid #e8d6fb;box-sizing:border-box"></div><div style="position:absolute;left:45.1px;top:540.3000000000001px;width:26.9px;height:26.9px;border-radius:8px;background:#f1e7fd"></div><svg style="position:absolute;left:51.80px;top:547.00px;" width="13.5" height="13.5" viewBox="0 0 24 24" fill="none" stroke="#9333ea" stroke-width="2.3" stroke-linecap="round" stroke-linejoin="round"><path d="M19 21v-2a4 4 0 0 0-4-4H9a4 4 0 0 0-4 4v2"/><circle cx="12" cy="7" r="4"/></svg><div style="position:absolute;left:81.70px;top:535.05px;font-size:14px;line-height:18px;font-weight:400;color:#364152;white-space:nowrap;letter-spacing:-0.05px;">Individuels</div><div style="position:absolute;left:81.70px;top:553.25px;font-size:14px;line-height:18px;font-weight:400;color:#6b7280;white-space:nowrap;letter-spacing:0.05px;">stagiaires</div><div style="position:absolute;left:33.00px;top:535.85px;font-size:14px;line-height:18px;font-weight:700;color:#1a2030;white-space:nowrap;letter-spacing:0px;width:444.0px;text-align:right;">4</div><div style="position:absolute;left:33.00px;top:553.55px;font-size:14px;line-height:18px;font-weight:400;color:#6b7280;white-space:nowrap;letter-spacing:0.05px;width:444.0px;text-align:right;">individuels</div></div><div class="card" style="position:absolute;left:295px;top:983px;width:522.5px;height:630px;"><div class="cardbg"></div><div style="position:absolute;left:2px;top:2px;right:2px;height:40px;border-radius:14px 14px 0 0;overflow:hidden"><div style="height:4px;background:#3f7af6"></div></div><div style="position:absolute;left:18.60px;top:33.67px;font-size:20px;line-height:25px;font-weight:700;color:#0f1322;white-space:nowrap;letter-spacing:0.23px;">TDD, DDD, BDD et Clean Architecture dans le</div><div style="position:absolute;left:18.60px;top:58.77px;font-size:20px;line-height:25px;font-weight:700;color:#0f1322;white-space:nowrap;letter-spacing:0.6px;">monde PHP/Symfony</div><div style="position:absolute;left:475.3px;top:33.4px;width:29px;height:29px;border-radius:10px;background:#4a7ffa;box-shadow:0 3px 8px rgba(59,110,246,.28)"></div><svg style="position:absolute;left:482.60px;top:40.70px;" width="14.4" height="14.4" viewBox="0 0 24 24" fill="none" stroke="#ffffff" stroke-width="2.2" stroke-linecap="round" stroke-linejoin="round"><path d="M8 2v4"/><path d="M16 2v4"/><rect width="18" height="18" x="3" y="4" rx="2"/><path d="M3 10h18"/></svg><div style="position:absolute;left:18.3px;top:93px;height:37.7px;border-radius:9px;background:#edfcf4;border:1.5px solid #aee9c6;box-sizing:border-box;box-shadow:0 2px 5px rgba(16,120,70,.08);padding:0 11.5px 0 13px;display:flex;align-items:center;white-space:nowrap"><span style="display:inline-block;width:22.4px;height:22px;border-radius:7px;background:#3db87a;color:#fff;font-size:12px;line-height:22px;text-align:center;margin-right:7.5px">€</span><span style="font-size:16px;font-weight:700;color:#1c7a4d;letter-spacing:1.2px;line-height:22px">10<i class="ns"></i>000,00&nbsp;€</span></div><div style="position:absolute;left:18.3px;top:145.2px;width:486px;height:400px;border-radius:14px;background:#eff5fe;border:1.5px solid #c5dafa;box-sizing:border-box"></div><div style="position:absolute;left:38px;top:164.8px;width:446.3px;height:86.6px;border-radius:11px;background:#ffffff;border:1px solid #dbe7fb;box-sizing:border-box;box-shadow:0 2px 4px rgba(30,60,120,.07)"></div><div style="position:absolute;left:56.70px;top:188.66px;font-size:16px;line-height:20px;font-weight:700;color:#111522;white-space:nowrap;letter-spacing:0.3px;">15 déc. 2025</div><div style="position:absolute;left:56.20px;top:211.15px;font-size:14px;line-height:18px;font-weight:400;color:#2f5de6;white-space:nowrap;letter-spacing:0.7px;">Lundi</div><div style="position:absolute;right:56.499999999999986px;top:178.8px;display:flex;flex-direction:column"><div style="height:26.5px;border-radius:6px;background:#dde9fd;color:#1c3aa6;font-size:14px;line-height:26.5px;text-align:right;padding:0 9.2px 0 12.2px;white-space:nowrap;letter-spacing:0.1px;margin-bottom:5px">09:30 - 12:30</div><div style="height:26.5px;border-radius:6px;background:#dde9fd;color:#1c3aa6;font-size:14px;line-height:26.5px;text-align:right;padding:0 9.2px 0 12.2px;white-space:nowrap;letter-spacing:0.1px;margin-bottom:5px">13:30 - 17:30</div></div></div><div class="card" style="position:absolute;left:844.4px;top:983px;width:522.5px;height:630px;"><div class="cardbg"></div><div style="position:absolute;left:2px;top:2px;right:2px;height:40px;border-radius:14px 14px 0 0;overflow:hidden"><div style="height:4px;background:#3f7af6"></div></div><div style="position:absolute;left:18.60px;top:33.67px;font-size:20px;line-height:25px;font-weight:700;color:#0f1322;white-space:nowrap;letter-spacing:0.25px;">TDD, DDD, BDD et Clean Architecture dans le</div><div style="position:absolute;left:18.60px;top:58.77px;font-size:20px;line-height:25px;font-weight:700;color:#0f1322;white-space:nowrap;letter-spacing:0.8px;">monde Node/Typescript</div><div style="position:absolute;left:475.3px;top:33.4px;width:29px;height:29px;border-radius:10px;background:#4a7ffa;box-shadow:0 3px 8px rgba(59,110,246,.28)"></div><svg style="position:absolute;left:482.60px;top:40.70px;" width="14.4" height="14.4" viewBox="0 0 24 24" fill="none" stroke="#ffffff" stroke-width="2.2" stroke-linecap="round" stroke-linejoin="round"><path d="M8 2v4"/><path d="M16 2v4"/><rect width="18" height="18" x="3" y="4" rx="2"/><path d="M3 10h18"/></svg><div style="position:absolute;left:18.3px;top:93px;height:37.7px;border-radius:9px;background:#edfcf4;border:1.5px solid #aee9c6;box-sizing:border-box;box-shadow:0 2px 5px rgba(16,120,70,.08);padding:0 11.5px 0 13px;display:flex;align-items:center;white-space:nowrap"><span style="display:inline-block;width:22.4px;height:22px;border-radius:7px;background:#3db87a;color:#fff;font-size:12px;line-height:22px;text-align:center;margin-right:7.5px">€</span><span style="font-size:16px;font-weight:700;color:#1c7a4d;letter-spacing:1.2px;line-height:22px">1500,00&nbsp;€</span></div><div style="position:absolute;left:18.3px;top:145.2px;width:486px;height:400px;border-radius:14px;background:#eff5fe;border:1.5px solid #c5dafa;box-sizing:border-box"></div><div style="position:absolute;left:38px;top:164.8px;width:446.3px;height:86.6px;border-radius:11px;background:#ffffff;border:1px solid #dbe7fb;box-sizing:border-box;box-shadow:0 2px 4px rgba(30,60,120,.07)"></div><div style="position:absolute;left:56.70px;top:188.66px;font-size:16px;line-height:20px;font-weight:700;color:#111522;white-space:nowrap;letter-spacing:0.3px;">8 déc. 2025</div><div style="position:absolute;left:56.20px;top:211.15px;font-size:14px;line-height:18px;font-weight:400;color:#2f5de6;white-space:nowrap;letter-spacing:0.7px;">Lundi</div><div style="position:absolute;right:56.499999999999986px;top:178.8px;display:flex;flex-direction:column"><div style="height:26.5px;border-radius:6px;background:#dde9fd;color:#1c3aa6;font-size:14px;line-height:26.5px;text-align:right;padding:0 9.2px 0 8.5px;white-space:nowrap;letter-spacing:0.1px;margin-bottom:5px">09:15 - 12:15</div><div style="height:26.5px;border-radius:6px;background:#dde9fd;color:#1c3aa6;font-size:14px;line-height:26.5px;text-align:right;padding:0 9.2px 0 8.5px;white-space:nowrap;letter-spacing:0.1px;margin-bottom:5px">13:00 - 17:00</div></div></div><div class="card" style="position:absolute;left:1393.8px;top:983px;width:522.5px;height:630px;"><div class="cardbg"></div><div style="position:absolute;left:2px;top:2px;right:2px;height:40px;border-radius:14px 14px 0 0;overflow:hidden"><div style="height:4px;background:#3f7af6"></div></div><div style="position:absolute;left:18.60px;top:33.67px;font-size:20px;line-height:25px;font-weight:700;color:#0f1322;white-space:nowrap;letter-spacing:0.37px;">TDD, DDD et Clean Architecture dans le</div><div style="position:absolute;left:18.60px;top:58.77px;font-size:20px;line-height:25px;font-weight:700;color:#0f1322;white-space:nowrap;letter-spacing:0.66px;">monde Java</div><div style="position:absolute;left:475.3px;top:33.4px;width:29px;height:29px;border-radius:10px;background:#4a7ffa;box-shadow:0 3px 8px rgba(59,110,246,.28)"></div><svg style="position:absolute;left:482.60px;top:40.70px;" width="14.4" height="14.4" viewBox="0 0 24 24" fill="none" stroke="#ffffff" stroke-width="2.2" stroke-linecap="round" stroke-linejoin="round"><path d="M8 2v4"/><path d="M16 2v4"/><rect width="18" height="18" x="3" y="4" rx="2"/><path d="M3 10h18"/></svg><div style="position:absolute;left:18.3px;top:93px;height:37.7px;border-radius:9px;background:#edfcf4;border:1.5px solid #aee9c6;box-sizing:border-box;box-shadow:0 2px 5px rgba(16,120,70,.08);padding:0 11.5px 0 13px;display:flex;align-items:center;white-space:nowrap"><span style="display:inline-block;width:22.4px;height:22px;border-radius:7px;background:#3db87a;color:#fff;font-size:12px;line-height:22px;text-align:center;margin-right:7.5px">€</span><span style="font-size:16px;font-weight:700;color:#1c7a4d;letter-spacing:1.2px;line-height:22px">1900,00&nbsp;€</span></div><div style="position:absolute;left:18.3px;top:145.2px;width:486px;height:400px;border-radius:14px;background:#eff5fe;border:1.5px solid #c5dafa;box-sizing:border-box"></div><div style="position:absolute;left:38px;top:164.8px;width:446.3px;height:86.6px;border-radius:11px;background:#ffffff;border:1px solid #dbe7fb;box-sizing:border-box;box-shadow:0 2px 4px rgba(30,60,120,.07)"></div><div style="position:absolute;left:56.70px;top:188.66px;font-size:16px;line-height:20px;font-weight:700;color:#111522;white-space:nowrap;letter-spacing:0.3px;">8 déc. 2025</div><div style="position:absolute;left:56.20px;top:211.15px;font-size:14px;line-height:18px;font-weight:400;color:#2f5de6;white-space:nowrap;letter-spacing:0.7px;">Lundi</div><div style="position:absolute;right:56.499999999999986px;top:178.8px;display:flex;flex-direction:column"><div style="height:26.5px;border-radius:6px;background:#dde9fd;color:#1c3aa6;font-size:14px;line-height:26.5px;text-align:right;padding:0 9.2px 0 8.5px;white-space:nowrap;letter-spacing:0.1px;margin-bottom:5px">09:15 - 12:15</div><div style="height:26.5px;border-radius:6px;background:#dde9fd;color:#1c3aa6;font-size:14px;line-height:26.5px;text-align:right;padding:0 9.2px 0 8.5px;white-space:nowrap;letter-spacing:0.1px;margin-bottom:5px">13:00 - 17:00</div></div></div>
</body></html>
